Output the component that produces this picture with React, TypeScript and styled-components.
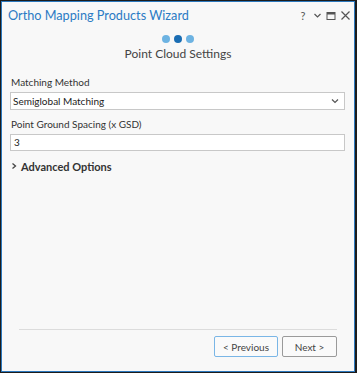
import React from "react";
import { styled, createGlobalStyle } from "styled-components";

const GlobalStyle = createGlobalStyle`
  html, body {
    margin: 0;
    padding: 0;
    background: #1c1c1c;
  }
  * {
    box-sizing: border-box;
  }
`;

const App = () => {
  return (
    <>
      <GlobalStyle />
      <StFrame>
        <StWindow>
          <StTitleBar>
            <StTitle>Ortho Mapping Products Wizard</StTitle>
            <StTitleIcons>
              <StIconSlot>
                <StHelp>?</StHelp>
              </StIconSlot>
              <StIconSlot>
                <svg width="9" height="9" viewBox="0 0 9 9">
                  <path d="M1.5 3 L4.5 6 L7.5 3" fill="none" stroke="#555" strokeWidth="1.2" />
                </svg>
              </StIconSlot>
              <StIconSlot>
                <svg width="10" height="10" viewBox="0 0 10 10">
                  <rect x="1" y="1.5" width="8" height="7" fill="none" stroke="#555" strokeWidth="1" />
                  <rect x="1" y="1.5" width="8" height="2" fill="#555" />
                </svg>
              </StIconSlot>
              <StIconSlot>
                <svg width="11" height="11" viewBox="0 0 11 11">
                  <path d="M1.5 1.5 L9.5 9.5 M9.5 1.5 L1.5 9.5" stroke="#555" strokeWidth="1.2" />
                </svg>
              </StIconSlot>
            </StTitleIcons>
          </StTitleBar>

          <StStepper>
            <StDot />
            <StDot $active />
            <StDot />
          </StStepper>
          <StPageTitle>Point Cloud Settings</StPageTitle>

          <StForm>
            <StLabel>Matching Method</StLabel>
            <StSelect>
              <span>Semiglobal Matching</span>
              <svg width="10" height="8" viewBox="0 0 10 8">
                <path d="M2 2.5 L5 5.5 L8 2.5" fill="none" stroke="#555" strokeWidth="1.2" />
              </svg>
            </StSelect>
            <StLabel $gapTop>Point Ground Spacing (x GSD)</StLabel>
            <StInput>3</StInput>
            <StExpander>
              <svg width="8" height="8" viewBox="0 0 8 8">
                <path d="M2.5 1.5 L5.5 4 L2.5 6.5" fill="none" stroke="#444" strokeWidth="1.3" />
              </svg>
              <span>Advanced Options</span>
            </StExpander>
          </StForm>

          <StFooter>
            <StButtonRow>
              <StButton $primary>&lt; Previous</StButton>
              <StButton>Next &gt;</StButton>
            </StButtonRow>
          </StFooter>
        </StWindow>
      </StFrame>
    </>
  );
};

const StFrame = styled.div`
  width: 357px;
  height: 373px;
  padding: 1px 2px 1px 1px;
  background: #1c1c1c;
`;

const StWindow = styled.div`
  width: 100%;
  height: 100%;
  border: 1px solid #2c78bd;
  background: #f8f8f8;
  display: flex;
  flex-direction: column;
  font-family: Lato, "Noto Sans", sans-serif;
  color: #333;
`;

const StTitleBar = styled.div`
  display: flex;
  align-items: center;
  justify-content: space-between;
  height: 26px;
  padding: 0 2px 0 6px;
`;

const StTitle = styled.div`
  font-size: 12.7px;
  color: #2b7bc4;
`;

const StTitleIcons = styled.div`
  display: flex;
  align-items: center;
  margin-top: 1px;
`;

const StIconSlot = styled.div`
  width: 14px;
  height: 14px;
  display: flex;
  align-items: center;
  justify-content: center;
`;

const StHelp = styled.span`
  font-size: 11px;
  line-height: 11px;
  color: #555;
`;

const StStepper = styled.div`
  display: flex;
  justify-content: center;
  gap: 4px;
  margin-top: 7px;
`;

const StDot = styled.div<{ $active?: boolean }>`
  width: 8px;
  height: 8px;
  border-radius: 50%;
  background: ${({ $active }) => ($active ? "#1a6db3" : "#6db3e2")};
`;

const StPageTitle = styled.div`
  text-align: center;
  font-size: 12px;
  line-height: 14px;
  color: #444;
  margin-top: 4px;
`;

const StForm = styled.div`
  display: flex;
  flex-direction: column;
  padding: 0 9px 0 8px;
  margin-top: 13px;
`;

const StLabel = styled.div<{ $gapTop?: boolean }>`
  font-size: 10px;
  color: #333;
  height: 16px;
  line-height: 16px;
  margin-top: ${({ $gapTop }) => ($gapTop ? "6px" : "0")};
  margin-bottom: 2px;
  padding-left: 1px;
`;

const StSelect = styled.div`
  display: flex;
  align-items: center;
  justify-content: space-between;
  height: 18px;
  background: #fff;
  border: 1px solid #c8c8c8;
  padding: 0 4px 0 2px;
  font-size: 10px;
  color: #222;
`;

const StInput = styled.div`
  height: 17px;
  background: #fff;
  border: 1px solid #c8c8c8;
  padding: 0 3px;
  font-size: 10px;
  line-height: 15px;
  color: #222;
`;

const StExpander = styled.div`
  display: flex;
  align-items: center;
  gap: 3px;
  height: 14px;
  margin-top: 8px;
  font-size: 11px;
  font-weight: 700;
  color: #333;
`;

const StFooter = styled.div`
  margin: auto 17px 14px 17px;
  border-top: 1px solid #dcdcdc;
  padding-top: 6px;
`;

const StButtonRow = styled.div`
  display: flex;
  justify-content: flex-end;
  gap: 4px;
`;

const StButton = styled.button<{ $primary?: boolean }>`
  height: 21px;
  padding: 0;
  width: ${({ $primary }) => ($primary ? "64px" : "55px")};
  background: #fafafa;
  border: 1px solid ${({ $primary }) => ($primary ? "#7ab6e6" : "#9a9a9a")};
  border-radius: 2px;
  font-family: Lato, "Noto Sans", sans-serif;
  font-size: 10px;
  color: #444;
`;

export default App;
